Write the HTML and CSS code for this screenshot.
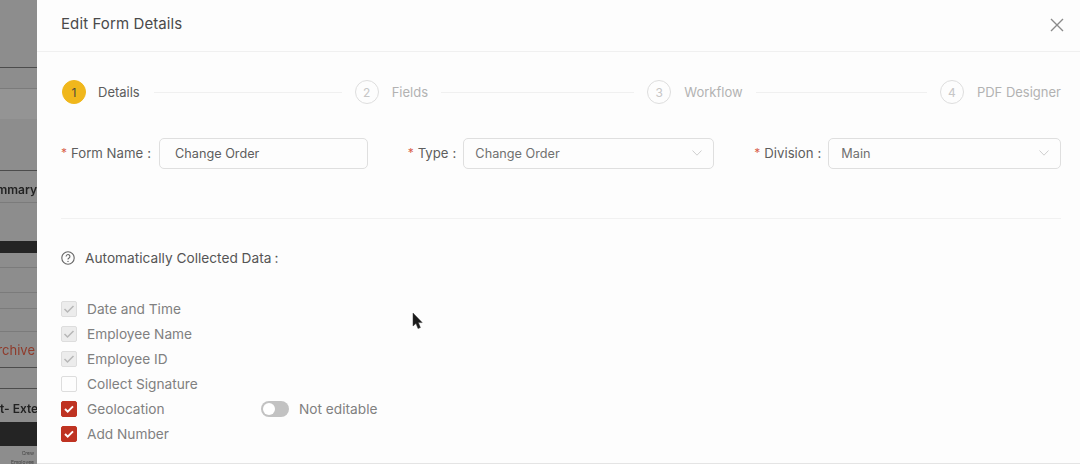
FILE: index.html
```html
<!DOCTYPE html>
<html lang="en">
<head>
<meta charset="utf-8">
<title>Edit Form Details</title>
<link rel="stylesheet" href="styles.css">
</head>
<body>
<div class="page">
  <aside class="backdrop">
    <div class="bg r67 line-dark"></div>
    <div class="bg r21 line-light"></div>
    <div class="bg r30 lighter"></div>
    <div class="bg r52 line-dark"></div>
    <div class="bg r32 line-light bd-text bd-summary"><span>mmary</span></div>
    <div class="bg r38"></div>
    <div class="bg r12 black"></div>
    <div class="bg r15 line-light"></div>
    <div class="bg r25 line-light"></div>
    <div class="bg r16 line-light"></div>
    <div class="bg r23 line-light"></div>
    <div class="bg r36 line-dark bd-red"><span>rchive</span></div>
    <div class="bg r21 line-dark"></div>
    <div class="bg r33 bd-text bd-start"><span>t- Exter</span></div>
    <div class="bg r24 black"></div>
    <div class="bg bd-small"><span>Crew</span><span>Employee</span></div>
  </aside>
  <main class="drawer">
    <header class="drawer-head">
      <h1 class="title">Edit Form Details</h1>
      <svg class="close" width="14" height="14" viewBox="0 0 14 14"><path d="M1 1 13 13M13 1 1 13"/></svg>
    </header>
    <div class="drawer-body">
      <ol class="steps">
        <li class="step active"><span class="num">1</span><span class="step-label">Details</span><span class="step-line"></span></li>
        <li class="step"><span class="num">2</span><span class="step-label">Fields</span><span class="step-line"></span></li>
        <li class="step"><span class="num">3</span><span class="step-label">Workflow</span><span class="step-line"></span></li>
        <li class="step last"><span class="num">4</span><span class="step-label">PDF Designer</span></li>
      </ol>
      <div class="form-row">
        <div class="field">
          <label class="label label-name"><span class="req">*</span>Form Name<span class="colon">:</span></label>
          <div class="control control-name">Change Order</div>
        </div>
        <div class="field">
          <label class="label"><span class="req">*</span>Type<span class="colon">:</span></label>
          <div class="control">Change Order
            <svg class="chev" width="10" height="6" viewBox="0 0 10 6"><path d="M.5.5 5 5.2 9.5.5"/></svg>
          </div>
        </div>
        <div class="field">
          <label class="label"><span class="req">*</span>Division<span class="colon">:</span></label>
          <div class="control control-div">Main
            <svg class="chev" width="10" height="6" viewBox="0 0 10 6"><path d="M.5.5 5 5.2 9.5.5"/></svg>
          </div>
        </div>
      </div>
      <div class="divider"></div>
      <div class="auto-head">
        <svg class="help" width="14" height="14" viewBox="0 0 14 14"><circle cx="7" cy="7" r="6.2"/><path d="M5.1 5.5a1.9 1.9 0 1 1 2.9 1.6c-.7.4-1 .8-1 1.5"/><circle class="dot" cx="7" cy="10.4" r=".7"/></svg>
        <span>Automatically Collected Data<span class="colon">:</span></span>
      </div>
      <ul class="checks">
        <li class="check"><span class="box disabled"><svg width="12" height="10" viewBox="0 0 12 10"><path d="M1.5 5 4.5 8 10.5 2"/></svg></span><span class="check-label">Date and Time</span></li>
        <li class="check"><span class="box disabled"><svg width="12" height="10" viewBox="0 0 12 10"><path d="M1.5 5 4.5 8 10.5 2"/></svg></span><span class="check-label">Employee Name</span></li>
        <li class="check"><span class="box disabled"><svg width="12" height="10" viewBox="0 0 12 10"><path d="M1.5 5 4.5 8 10.5 2"/></svg></span><span class="check-label">Employee ID</span></li>
        <li class="check"><span class="box"></span><span class="check-label">Collect Signature</span></li>
        <li class="check"><span class="box on"><svg width="12" height="10" viewBox="0 0 12 10"><path d="M2 5 4.7 7.6 10 2.4"/></svg></span><span class="check-label wide">Geolocation</span><span class="toggle"><span class="knob"></span></span><span class="toggle-label">Not editable</span></li>
        <li class="check"><span class="box on"><svg width="12" height="10" viewBox="0 0 12 10"><path d="M2 5 4.7 7.6 10 2.4"/></svg></span><span class="check-label">Add Number</span></li>
      </ul>
    </div>
  </main>
  <svg class="cursor" width="11" height="18" viewBox="0 0 11 18"><path d="M1 1V14L4 11.4 6 16.6 8.4 15.6 6.4 10.6H10.2Z"/></svg>
</div>
</body>
</html>
```
FILE: styles.css
```css
* { box-sizing: border-box; }
html, body { margin: 0; padding: 0; }
body { font-family: Inter, "Liberation Sans", sans-serif; background: #fdfdfd; }
.page { position: relative; display: flex; width: 1080px; height: 464px; overflow: hidden; }

.backdrop { width: 37px; flex: none; display: flex; flex-direction: column; background: #8d8d8d; overflow: hidden; filter: blur(.5px); }
.bg { flex: none; display: flex; align-items: center; justify-content: flex-end; white-space: nowrap; background: #8d8d8d; }
.r67 { height: 68px; } .r21 { height: 21px; } .r30 { height: 30px; } .r52 { height: 52px; }
.r32 { height: 32px; } .r38 { height: 38px; } .r12 { height: 12px; } .r15 { height: 15px; }
.r25 { height: 25px; } .r16 { height: 16px; } .r23 { height: 23px; } .r36 { height: 36px; }
.r33 { height: 33px; } .r24 { height: 24px; }
.lighter { background: #949494; }
.line-dark { border-bottom: 1px solid #4c4c4c; }
.line-light { border-bottom: 1px solid #7b7b7b; }
.black { background: #242424; }
.bd-text { font-size: 12px; font-weight: 600; color: #222; }
.bd-summary { padding-top: 5px; }
.bd-start { justify-content: flex-start; padding-top: 5px; }
.bd-red { font-size: 13px; color: #8f3a2a; padding-right: 2px; }
.bd-small { flex: 1; flex-direction: column; align-items: flex-end; font-size: 5px; line-height: 9px; color: #444; padding: 3px 3px 0 0; justify-content: flex-start; }

.drawer { flex: 1; min-width: 0; display: flex; flex-direction: column; background: #fdfdfd; border-bottom: 1px solid #e4e4e4; }
.drawer-head { height: 52px; flex: none; display: flex; align-items: center; justify-content: space-between; padding: 0 16px 4px 24px; border-bottom: 1px solid #f0f0f0; }
.title { margin: 0; font-size: 15px; letter-spacing: .1px; font-weight: 400; color: #4a4a4a; }
.close { margin-top: 2px; }
.close path { fill: none; stroke: #8a8a8a; stroke-width: 1.4; }

.drawer-body { flex: 1; padding: 27px 19px 0 24px; }
.steps { list-style: none; margin: 0; padding: 0 0 0 1px; display: flex; align-items: center; height: 26px; }
.step { flex: 1; display: flex; align-items: center; gap: 13px; padding-right: 13px; color: #b2b2b2; font-size: 13px; white-space: nowrap; }
.step.last { flex: none; padding-right: 0; }
.num { width: 24px; height: 24px; flex: none; border-radius: 50%; border: 1px solid #dedede; color: #c6c6c6; font-size: 12px; display: flex; align-items: center; justify-content: center; }
.step.active { gap: 12px; color: #5c5c5c; }
.step.active .num { background: #f0b71c; border-color: #f0b71c; color: #4a4a3a; }
.step.active .step-line { margin-left: 2px; }
.step-label { line-height: 20px; }
.step-line { flex: 1; height: 1px; background: #f0f0f0; }

.form-row { display: grid; grid-template-columns: repeat(3, 1fr); gap: 40px; margin-top: 33px; }
.field { display: flex; align-items: center; min-width: 0; }
.label { flex: none; display: flex; align-items: center; font-size: 13.2px; color: #5e5e5e; margin-right: 7px; padding-bottom: 2px; white-space: nowrap; }
.label-name { margin-right: 8px; }
.req { color: #d9614c; margin-right: 4px; font-size: 12px; }
.colon { margin-left: 4px; }
.control { flex: 1; height: 31px; display: flex; align-items: center; justify-content: space-between; padding: 0 11px 1px 11px; border: 1px solid #dfdfdf; border-radius: 5px; font-size: 12.7px; color: #707070; background: #fdfdfd; }
.control-name { padding-left: 15px; color: #5e5e5e; }
.control-div { padding-left: 12px; }
.chev path { fill: none; stroke: #cfcfcf; stroke-width: 1; }

.divider { height: 1px; background: #f1f1f1; margin-top: 49px; }

.auto-head { display: flex; align-items: center; gap: 10px; margin-top: 30px; height: 18px; font-size: 13.7px; color: #555; }
.auto-head .colon { margin-left: 3px; }
.help circle, .help path { fill: none; stroke: #666; stroke-width: 1.1; }
.help .dot { fill: #666; stroke: none; }

.checks { list-style: none; margin: 29px 0 0; padding: 0; }
.check { display: flex; align-items: center; height: 25px; font-size: 13.7px; color: #808080; }
.box { width: 16px; height: 16px; flex: none; display: flex; align-items: center; justify-content: center; border: 1px solid #dddddd; border-radius: 2px; margin-right: 10px; }
.box svg path { fill: none; stroke: #fff; stroke-width: 2; }
.box.disabled { background: #ececec; }
.box.disabled svg path { stroke: #b7b7b7; stroke-width: 1.5; }
.box.on { background: #bf3322; border-color: #bf3322; }
.check-label.wide { width: 174px; }
.toggle { width: 28px; height: 16px; border-radius: 8px; background: #c2c2c2; padding: 2px; margin-right: 10px; }
.knob { display: block; width: 12px; height: 12px; border-radius: 50%; background: #fff; }
.toggle-label { color: #808080; }

.cursor { position: absolute; left: 412px; top: 312px; }
.cursor path { fill: #1a1a1a; stroke: #3a3a3a; stroke-width: .5; }
```
